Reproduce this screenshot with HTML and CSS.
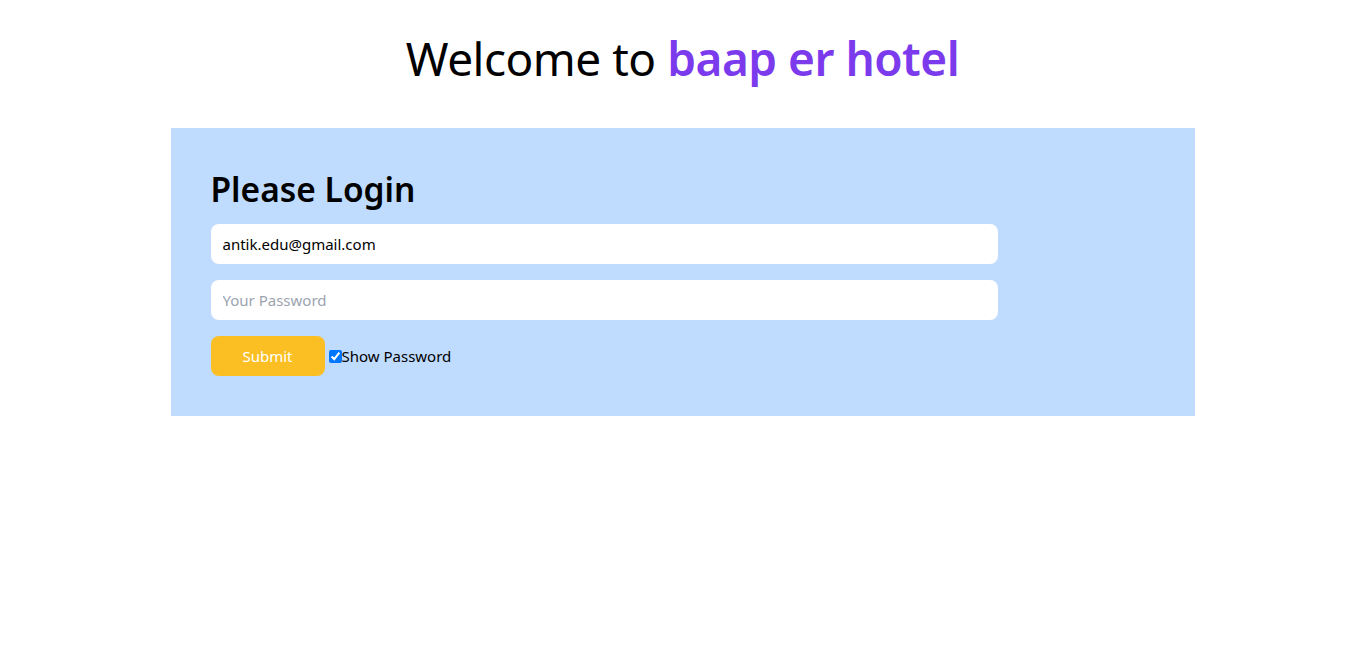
FILE: index.html
```html
<!DOCTYPE html>
<html lang="en">
<head>
<meta charset="utf-8">
<title>Login</title>
<link rel="stylesheet" href="styles.css">
</head>
<body>
<h1 class="title">Welcome to <span class="brand">baap er hotel</span></h1>
<main class="card">
  <h2 class="card-title">Please Login</h2>
  <form class="form">
    <input class="field" type="email" value="antik.edu@gmail.com">
    <input class="field" type="password" placeholder="Your Password">
    <div class="actions">
      <button class="submit" type="button">Submit</button>
      <label class="show"><input class="check" type="checkbox" checked>Show Password</label>
    </div>
  </form>
</main>
</body>
</html>
```
FILE: styles.css
```css
* { box-sizing: border-box; }
html, body { margin: 0; padding: 0; background: #fff; }
body {
  font-family: "Noto Sans", "Open Sans", sans-serif;
  color: #000;
}
.title {
  margin: 0;
  padding-top: 34px;
  font-size: 46px;
  line-height: 48px;
  font-weight: 400;
  text-align: center;
  letter-spacing: -0.5px;
}
.brand {
  color: #7c3aed;
  font-weight: 600;
}
.card {
  width: 1024px;
  max-width: 100%;
  margin: 46px auto 0;
  background: #bfdbfe;
  padding: 40px;
}
.card-title {
  margin: 0 0 16px;
  font-size: 33.5px;
  line-height: 40px;
  font-weight: 600;
  padding-top: 1px;
  height: 40px;
}
.form {
  display: flex;
  flex-direction: column;
  gap: 16px;
}
.field {
  width: 83.4%;
  height: 40px;
  border: none;
  border-radius: 8px;
  background: #fff;
  padding: 0 12px;
  font-family: inherit;
  font-size: 15px;
  color: #000;
  outline: none;
}
.field::placeholder { color: #9ca3af; }
.actions {
  display: flex;
  align-items: center;
}
.submit {
  width: 114px;
  height: 40px;
  border: none;
  border-radius: 8px;
  background: #fbbf24;
  color: #fff;
  font-family: inherit;
  font-size: 15px;
  font-weight: 400;
}
.show {
  display: flex;
  align-items: center;
  font-size: 15px;
}
.check {
  margin: 0 0 0 4px;
  width: 13px;
  height: 13px;
}
```
